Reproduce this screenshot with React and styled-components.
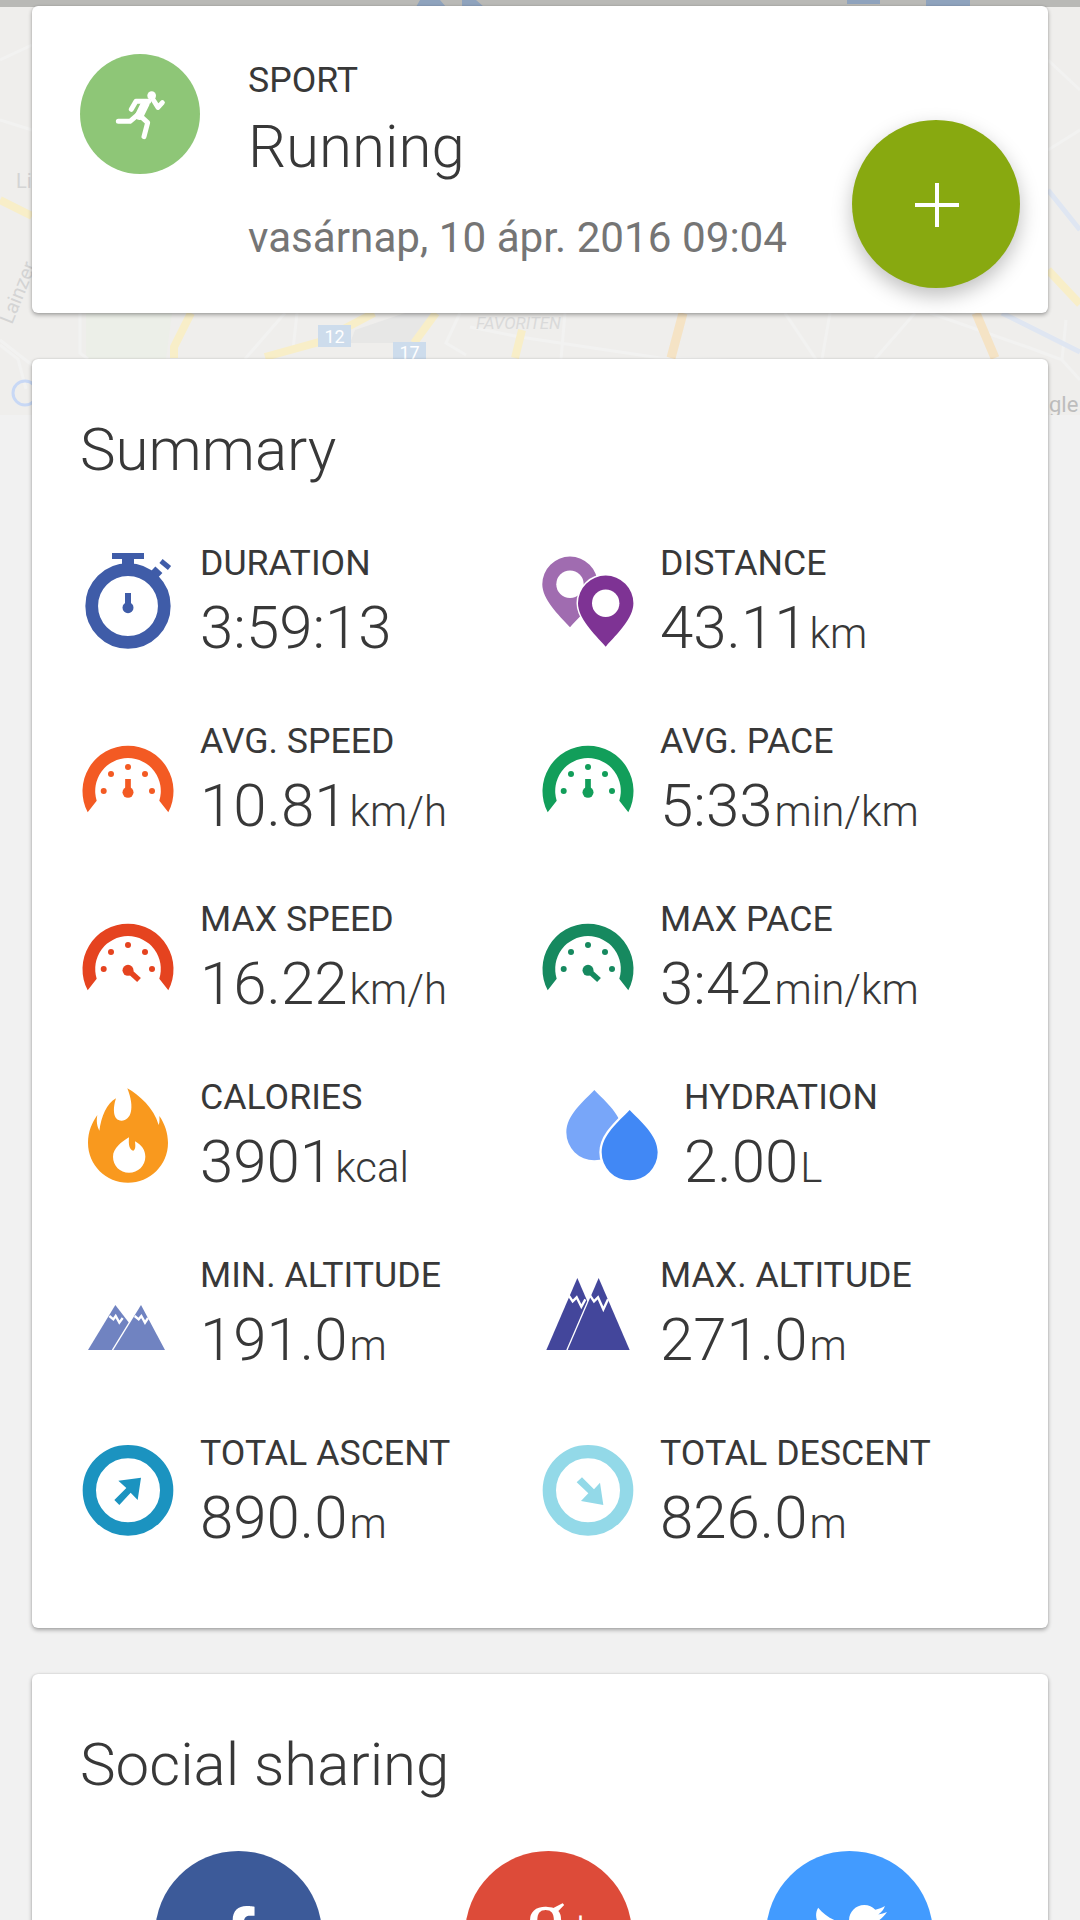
import React from "react";
import styled, { createGlobalStyle } from "styled-components";
import { FaFacebookF, FaTwitter } from "react-icons/fa";

const GlobalStyle = createGlobalStyle`
  * {
    box-sizing: border-box;
  }
  html,
  body {
    margin: 0;
    padding: 0;
    background: #f1f1f1;
    font-family: Roboto, "Liberation Sans", sans-serif;
  }
`;

const Page = styled.div`
  position: relative;
  width: 1080px;
  height: 1920px;
  overflow: hidden;
  padding: 6px 32px 0;
  background: #f1f1f1;
`;

const MapLayer = styled.svg`
  position: absolute;
  top: 0;
  left: 0;
  width: 1080px;
  height: 415px;
`;

const Card = styled.section`
  position: relative;
  background: #fff;
  border-radius: 6px;
  box-shadow: 0 2px 4px rgba(0, 0, 0, 0.32), 0 0 2px rgba(0, 0, 0, 0.12);
`;

const SportCard = styled(Card)`
  display: flex;
  height: 307px;
  padding: 48px;
  gap: 48px;
`;

const SportBadge = styled.div`
  display: flex;
  flex: none;
  width: 120px;
  height: 120px;
  align-items: center;
  justify-content: center;
  border-radius: 50%;
  background: #8ec677;
`;

const SportText = styled.div`
  display: flex;
  flex-direction: column;
`;

const SportLabel = styled.div`
  margin-top: 4px;
  font-size: 35.7px;
  line-height: 44px;
  color: #383838;
`;

const SportName = styled.div`
  margin-top: 9px;
  font-size: 60px;
  font-weight: 300;
  line-height: 72px;
  color: #383838;
`;

const SportDate = styled.div`
  margin-top: 30px;
  font-size: 42.2px;
  line-height: 50px;
  color: #757575;
`;

const Fab = styled.div`
  position: absolute;
  top: 114px;
  right: 28px;
  display: flex;
  width: 168px;
  height: 168px;
  align-items: center;
  justify-content: center;
  border-radius: 50%;
  background: #88a910;
  box-shadow: 0 8px 20px rgba(0, 0, 0, 0.25);
`;

const PlusIcon = styled.svg`
  width: 44px;
  height: 44px;
  margin: 2px 0 0 2px;
`;

const SummaryCard = styled(Card)`
  height: 1269px;
  margin-top: 46px;
  padding: 0 48px;
`;

const CardTitle = styled.h2`
  margin: 0;
  font-size: 60px;
  font-weight: 300;
  line-height: 72px;
  color: #383838;
`;

const SummaryTitle = styled(CardTitle)`
  padding: 55px 0 25px;
`;

const StatGrid = styled.div`
  display: grid;
  grid-template-columns: 460px 460px;
  grid-auto-rows: 178px;
`;

const Stat = styled.div`
  display: flex;
  align-items: center;
  gap: 24px;
  margin-left: ${(p) => p.$shift || 0}px;
`;

const StatIcon = styled.svg`
  flex: none;
  width: 96px;
  height: 96px;
  overflow: visible;
`;

const StatText = styled.div`
  display: flex;
  flex-direction: column;
  padding-top: 4px;
`;

const StatLabel = styled.div`
  font-size: 35.7px;
  line-height: 42px;
  color: #383838;
`;

const StatValue = styled.div`
  margin-top: 9px;
  font-size: 60px;
  font-weight: 300;
  line-height: 70px;
  color: #383838;
  white-space: nowrap;
`;

const StatUnit = styled.span`
  margin-left: 2px;
  font-size: 42px;
  line-height: 1;
`;

const SocialCard = styled(Card)`
  height: 400px;
  margin-top: 46px;
  padding: 55px 48px 0;
`;

const SocialRow = styled.div`
  display: grid;
  grid-template-columns: 310px 301px 167px;
  margin-top: 50px;
  padding-left: 75px;
`;

const SocialButton = styled.div`
  display: flex;
  width: 167px;
  height: 167px;
  align-items: center;
  justify-content: center;
  border-radius: 50%;
  color: #fff;
  background: ${(p) => p.$color};
`;

const MapLabel = styled.text`
  font-family: Roboto, sans-serif;
  font-size: ${(p) => p.$size || 18}px;
  fill: ${(p) => p.$color || "#fff"};
`;

const LogoText = styled.text`
  font-family: "Liberation Serif", serif;
  font-size: ${(p) => p.$size}px;
  fill: #fff;
`;

function MapBackground() {
  return (
    <MapLayer viewBox="0 0 1080 415">
      <rect width="1080" height="415" fill="#efeeec" />
      <rect width="1080" height="7" fill="#b9b9b6" />
      <path d="M420 0h20l6 7h-30zM462 0h14l8 7h-22z" fill="#8fa3bd" />
      <rect x="847" width="33" height="4" fill="#8fa3bd" />
      <rect x="926" width="44" height="6" fill="#8fa3bd" />
      <path d="M86 313h86l-6 46H86z" fill="#ecefe8" />
      <path d="M355 330l50-17h30l-20 30h-65z" fill="#e7e7e6" />
      <path d="M0 60l32-15M0 120l32 10M0 340l32 25M1048 60l32 30M1048 150l32-20" stroke="#f2f2f1" strokeWidth="3" fill="none" />
      <path d="M80 313v40l8 6M0 345l18 14 8 30M245 359l40-46M293 350l4-37M460 313l-14 30 20 12M470 327l50 10 40 6 100 15 70 2M565 313l-4 46M785 313l40 60M830 313l-8 46M915 313l-40 46M930 313l100 35 32 12 4-40M1062 360l18 20" stroke="#f2f2f1" strokeWidth="3" fill="none" />
      <path d="M191 313l-17 34v11M265 357l54-15 55-29M436 313l-22 30M522 330l-7 28" stroke="#f8eec8" strokeWidth="8" fill="none" />
      <path d="M683 313l-12 45M976 313l19 45" stroke="#f5e3c5" strokeWidth="9" fill="none" />
      <path d="M0 200l32 16M1048 270l32 34" stroke="#f8eec8" strokeWidth="8" fill="none" />
      <path d="M1002 313l78 39M1048 190l32 40" stroke="#dfe6f2" strokeWidth="5" fill="none" />
      <rect x="318" y="325" width="33" height="22" fill="#cddcec" />
      <rect x="393" y="342" width="33" height="17" fill="#cddcec" />
      <MapLabel x="334.500" y="343" textAnchor="middle">12</MapLabel>
      <MapLabel x="409.500" y="359" textAnchor="middle">17</MapLabel>
      <MapLabel x="476" y="329" $size={17} $color="#dadada" fontStyle="italic">FAVORITEN</MapLabel>
      <MapLabel x="16" y="188" $size={20} $color="#d4d4d4">Li</MapLabel>
      <MapLabel transform="translate(12 325) rotate(-68)" $size={20} $color="#d4d4d4">Lainzer</MapLabel>
      <circle cx="25" cy="393" r="12" fill="none" stroke="#c8d8f5" strokeWidth="3" />
      <MapLabel x="1049" y="412" $size={22} $color="#bdbdbd">gle</MapLabel>
    </MapLayer>
  );
}

function StopwatchIcon() {
  const c = "#3f5ca8";
  return (
    <StatIcon viewBox="0 0 96 96">
      <circle cx="48" cy="54" r="36.300" fill="none" stroke={c} strokeWidth="12.700" />
      <path d="M32 1h32v6H54v8H42V7H32z" fill={c} />
      <path d="M73 17l7 6.500" stroke={c} strokeWidth="7" />
      <path d="M81 9l8.500 7" stroke={c} strokeWidth="5" />
      <path d="M45 41h6v14h-6z" fill={c} />
      <circle cx="48" cy="55.700" r="5.500" fill={c} />
    </StatIcon>
  );
}

function GaugeIcon({ color, max }) {
  const dots = [[23.7, 61], [31, 44], [48, 37], [65, 44], [72, 61]];
  return (
    <StatIcon viewBox="0 0 96 96">
      <path d="M7.700 82.300A45.500 45.500 0 1 1 88.300 82.300L79.300 70.700A32.800 32.800 0 1 0 16.700 70.700Z" fill={color} />
      {dots.map(([x, y]) => (
        <circle key={x} cx={x} cy={y} r="3" fill={color} />
      ))}
      <circle cx="48" cy="62.300" r="5.500" fill={color} />
      {max ? (
        <path d="M48 62l11 10" stroke={color} strokeWidth="5.500" />
      ) : (
        <path d="M48 49v13" stroke={color} strokeWidth="5.700" />
      )}
    </StatIcon>
  );
}

function pinPath(x, y, r, tip) {
  return `M${x - r} ${y}A${r} ${r} 0 1 1 ${x + r} ${y}C${x + r} ${y + 15} ${x + 12} ${y + 30} ${x} ${tip}C${x - 12} ${y + 30} ${x - r} ${y + 15} ${x - r} ${y}Z`;
}

function PinsIcon() {
  return (
    <StatIcon viewBox="0 0 96 96">
      <path d={pinPath(30, 32.3, 27.7, 75.3)} fill="#a06cb0" />
      <circle cx="30" cy="32.300" r="13.700" fill="#fff" />
      <path d={pinPath(65.7, 51.3, 27.7, 94.7)} fill="#7e3394" stroke="#fff" strokeWidth="3" paintOrder="stroke" />
      <circle cx="65.700" cy="51.300" r="13.700" fill="#fff" />
    </StatIcon>
  );
}

function FlameIcon() {
  return (
    <StatIcon viewBox="60 558 288 288">
      <path
        d="M202 565C238 585 282 625 296 675C300 665 298 655 298 648C314 670 324 700 324 728C324 795 270 848 204 848C138 848 84 795 84 728C84 695 96 668 112 645C108 665 112 680 118 692C124 650 140 610 168 595C158 625 158 662 185 662C212 662 226 625 202 565Z"
        fill="#f9991e"
      />
      <path
        d="M207 712C205 735 208 750 220 752C228 748 226 735 225 724C245 735 256 750 256 770C256 797 234 818 207 818C180 818 159 797 159 770C159 745 185 725 207 712Z"
        fill="#fff"
      />
    </StatIcon>
  );
}

function dropPath(x, tip) {
  const y = tip + 127;
  return `M${x} ${tip}C${x - 33} ${tip + 35} ${x - 84} ${y - 52} ${x - 84} ${y}A84 84 0 0 0 ${x + 84} ${y}C${x + 84} ${y - 52} ${x + 33} ${tip + 35} ${x} ${tip}Z`;
}

function DropsIcon() {
  return (
    <StatIcon viewBox="132 78 288 288">
      <path d={dropPath(223, 90)} fill="#78a6f9" />
      <path d={dropPath(329, 150)} fill="#4188f5" stroke="#fff" strokeWidth="14" paintOrder="stroke" />
    </StatIcon>
  );
}

function MountainIcon({ color, small }) {
  const pts = small
    ? {
        left: "166,165 84,300 270,300",
        right: "243,165 160,300 315,300",
        zigLeft: "148,198 160,208 167,198 178,218 188,204",
        zigRight: "224,198 236,208 244,198 255,218 264,204",
      }
    : {
        left: "172,84 79,300 265,300",
        right: "236,84 143,300 329,300",
        zigLeft: "146,136 158,154 170,142 184,170 196,148",
        zigRight: "210,136 222,154 234,142 250,178 264,148",
      };
  return (
    <StatIcon viewBox="60 42 288 288">
      <polygon points={pts.left} fill={color} />
      <polygon points={pts.right} fill={color} stroke="#fff" strokeWidth="8" paintOrder="stroke" strokeLinejoin="round" />
      <polyline points={pts.zigLeft} fill="none" stroke="#fff" strokeWidth="7" />
      <polyline points={pts.zigRight} fill="none" stroke="#fff" strokeWidth="7" />
    </StatIcon>
  );
}

function ClimbIcon({ color, down }) {
  return (
    <StatIcon viewBox="60 576 288 288">
      <circle cx="204" cy="721" r="116" fill="none" stroke={color} strokeWidth="40" />
      {down ? (
        <path d="M250 765L183 753L205 730L170 697L186 682L222 718L240 698Z" fill={color} />
      ) : (
        <path d="M243 683L233 750L212 728L178 765L163 750L199 714L175 692Z" fill={color} />
      )}
    </StatIcon>
  );
}

const stats = [
  { label: "DURATION", value: "3:59:13", icon: <StopwatchIcon /> },
  { label: "DISTANCE", value: "43.11", unit: "km", icon: <PinsIcon /> },
  { label: "AVG. SPEED", value: "10.81", unit: "km/h", icon: <GaugeIcon color="#f35a23" /> },
  { label: "AVG. PACE", value: "5:33", unit: "min/km", icon: <GaugeIcon color="#129e5a" /> },
  { label: "MAX SPEED", value: "16.22", unit: "km/h", icon: <GaugeIcon color="#e5431f" max /> },
  { label: "MAX PACE", value: "3:42", unit: "min/km", icon: <GaugeIcon color="#16895f" max /> },
  { label: "CALORIES", value: "3901", unit: "kcal", icon: <FlameIcon /> },
  { label: "HYDRATION", value: "2.00", unit: "L", icon: <DropsIcon />, shift: 24 },
  { label: "MIN. ALTITUDE", value: "191.0", unit: "m", icon: <MountainIcon color="#7083c1" small /> },
  { label: "MAX. ALTITUDE", value: "271.0", unit: "m", icon: <MountainIcon color="#43469b" /> },
  { label: "TOTAL ASCENT", value: "890.0", unit: "m", icon: <ClimbIcon color="#1b93c0" /> },
  { label: "TOTAL DESCENT", value: "826.0", unit: "m", icon: <ClimbIcon color="#93d9e8" down /> },
];

export default function App() {
  return (
    <Page>
      <GlobalStyle />
      <MapBackground />

      <SportCard>
        <SportBadge>
          <svg width="100" height="100" viewBox="0 0 300 300">
            <circle cx="185" cy="95" r="13" fill="#fff" />
            <path
              d="M124 136L138 112H176M190 108L204 130L217 116M146 150L120 172H85M150 155L173 176L162 218"
              fill="none"
              stroke="#fff"
              strokeWidth="15"
              strokeLinecap="round"
              strokeLinejoin="round"
            />
            <path d="M166 118L148 155" stroke="#fff" strokeWidth="26" strokeLinecap="round" />
          </svg>
        </SportBadge>
        <SportText>
          <SportLabel>SPORT</SportLabel>
          <SportName>Running</SportName>
          <SportDate>vasárnap, 10 ápr. 2016 09:04</SportDate>
        </SportText>
        <Fab>
          <PlusIcon viewBox="0 0 44 44">
            <path d="M22 0v44M0 22h44" stroke="#fff" strokeWidth="4" />
          </PlusIcon>
        </Fab>
      </SportCard>

      <SummaryCard>
        <SummaryTitle>Summary</SummaryTitle>
        <StatGrid>
          {stats.map((s) => (
            <Stat key={s.label} $shift={s.shift}>
              {s.icon}
              <StatText>
                <StatLabel>{s.label}</StatLabel>
                <StatValue>
                  {s.value}
                  {s.unit && <StatUnit>{s.unit}</StatUnit>}
                </StatValue>
              </StatText>
            </Stat>
          ))}
        </StatGrid>
      </SummaryCard>

      <SocialCard>
        <CardTitle>Social sharing</CardTitle>
        <SocialRow>
          <SocialButton $color="#3c5a99">
            <FaFacebookF size={58} />
          </SocialButton>
          <SocialButton $color="#dd4b39">
            <svg width="167" height="167" viewBox="0 0 167 167">
              <LogoText x="60" y="96" $size={85}>g</LogoText>
              <LogoText x="102" y="92" $size={48}>+</LogoText>
            </svg>
          </SocialButton>
          <SocialButton $color="#429bff">
            <FaTwitter size={74} />
          </SocialButton>
        </SocialRow>
      </SocialCard>
    </Page>
  );
}
